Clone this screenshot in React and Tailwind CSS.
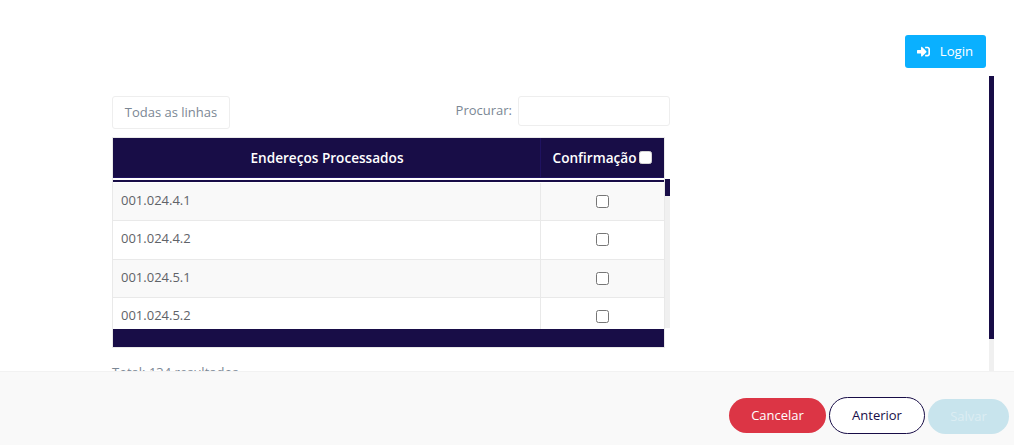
import { FaSignInAlt } from 'react-icons/fa'

const rows = ['001.024.4.1', '001.024.4.2', '001.024.5.1', '001.024.5.2']

function Check({ className = '' }) {
  return <span className={`block h-[13px] w-[13px] rounded-[2.5px] ${className}`} />
}

function TableBody() {
  return (
    <div className="flex w-[558px]">
      <div className="h-[147px] w-[553px] overflow-hidden border-x border-[#e9e9e9] pt-[0.85px]">
        {rows.map((code, i) => (
          <div
            key={code}
            className={`flex h-[38.35px] border-b border-[#e9e9e9] ${i % 2 === 0 ? 'bg-[#f9f9f9]' : 'bg-white'}`}
          >
            <div className="flex-1 pl-2 pt-[8.15px] text-[13px] leading-[18px] text-[#5f6368]">{code}</div>
            <div className="flex w-[124px] justify-center border-l border-[#e9e9e9] pt-[12.15px]">
              <Check className="border border-[#767676] bg-white" />
            </div>
          </div>
        ))}
      </div>
      <div className="-mt-[3px] h-[149px] w-[5px] bg-[#f0f0f0]">
        <div className="h-[17px] w-[5px] bg-[#180d47]" />
      </div>
    </div>
  )
}

export default function App() {
  return (
    <div className="flex h-screen flex-col overflow-hidden bg-white font-['Open_Sans',sans-serif]">
      <div className="flex min-h-0 flex-1">
        <main className="min-w-0 flex-1 pl-[112px] pt-[96px]">
          <div className="flex w-[558px] items-start justify-between">
            <button
              type="button"
              className="h-[33px] w-[118px] rounded-[3px] border border-[#eeeeee] bg-white text-[13px] text-[#7b8794]"
            >
              Todas as linhas
            </button>
            <div className="flex items-center gap-[6px]">
              <span className="text-[13px] text-[#7b8794]">Procurar:</span>
              <input
                type="text"
                aria-label="Procurar"
                className="h-[30px] w-[152px] rounded-[3px] border border-[#eeeeee] bg-white"
              />
            </div>
          </div>

          <div className="mt-[8px] w-[553px] border-x border-t border-[#e9e9e9]">
            <div className="flex h-[40px] border-b border-[#1f1260] bg-[#180d47] text-[13.6px] font-semibold text-white">
              <div className="flex flex-1 items-center justify-center pl-[1px] pt-[2px]">Endereços Processados</div>
              <div className="flex w-[124px] items-center justify-center gap-[3px] border-l border-[#1f1260] pt-[2px]">
                Confirmação
                <Check className="-mt-[2px] border border-[#d4d4d4] bg-white" />
              </div>
            </div>
            <div className="mt-[2px] h-[2px] bg-[#180d47]" />
          </div>
          <TableBody />
          <div className="h-[19px] w-[553px] border-x border-b border-[#e9e9e9] bg-[#180d47]" />
          <p className="mt-[15px] text-[13px] leading-[18px] text-[#7b8794]">Total: 134 resultados</p>
        </main>

        <aside className="flex w-[105px] shrink-0 flex-col items-end">
          <button
            type="button"
            className="mr-[28px] mt-[35px] flex h-[33px] w-[81px] shrink-0 items-center justify-center gap-[10px] rounded-[3px] bg-[#0ab0ff] pr-[1px] text-[13.2px] font-medium text-white"
          >
            <FaSignInAlt className="text-[13px]" />
            Login
          </button>
          <div className="mr-[20px] mt-[8px] w-[5px] flex-1 bg-[#f0f0f0]">
            <div className="h-[263px] bg-[#180d47]" />
          </div>
        </aside>
      </div>

      <footer className="z-10 flex h-[74px] shrink-0 items-start justify-end gap-[3px] border-t border-[#f2f2f2] bg-[#f9f9f9] pr-[5px] pt-[26px]">
        <button
          type="button"
          className="h-[35px] w-[97px] rounded-full bg-[#dc3545] text-[13px] text-white"
        >
          Cancelar
        </button>
        <button
          type="button"
          className="h-[37px] w-[96px] -translate-y-px rounded-full border border-[#180d47] bg-white text-[13px] text-[#180d47]"
        >
          Anterior
        </button>
        <button
          type="button"
          className="h-[35px] w-[81px] translate-y-px rounded-full bg-[#c8e4ed] text-[13px] text-[#dcedf3]"
        >
          Salvar
        </button>
      </footer>
    </div>
  )
}
